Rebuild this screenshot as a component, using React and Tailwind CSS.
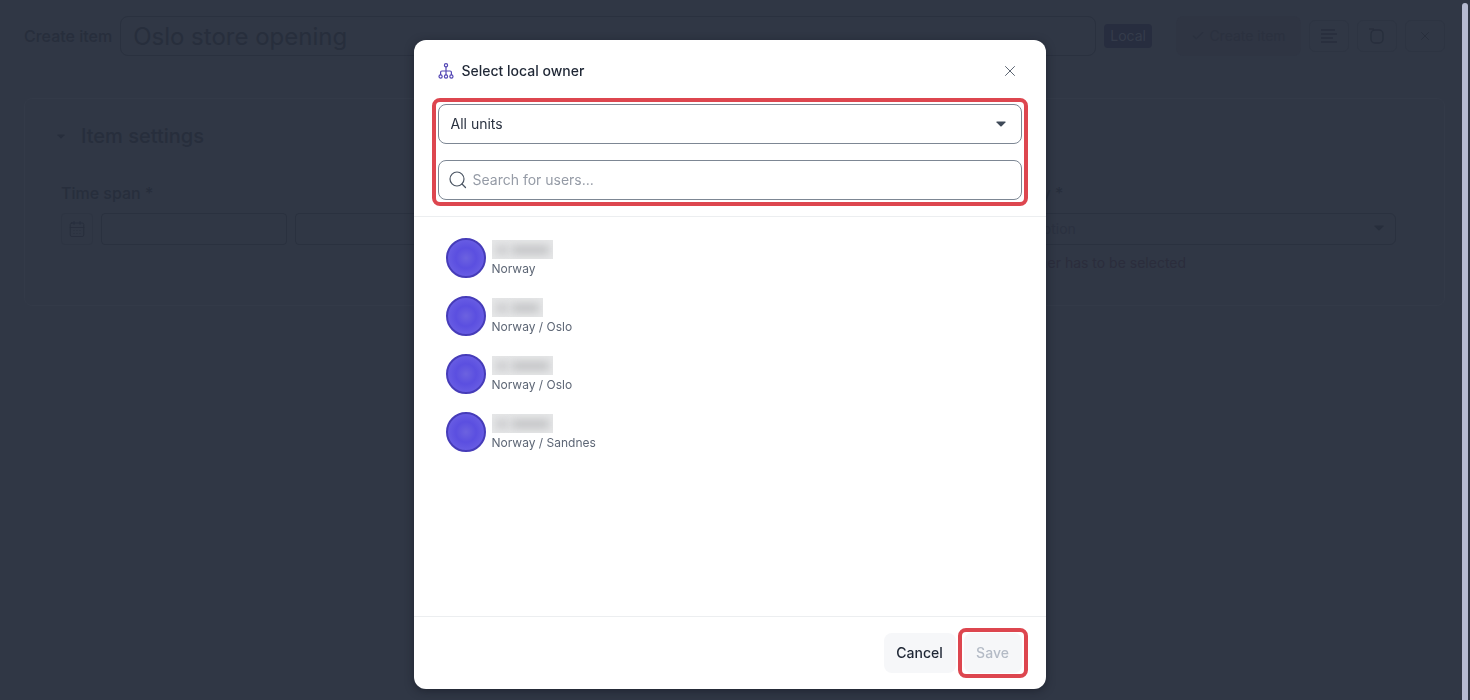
import React, { useState } from 'react';
import { CalendarDays, Check, X } from 'lucide-react';

const users = [
  { id: 1, unit: 'Norway', nameWidth: 'w-[61px]' },
  { id: 2, unit: 'Norway / Oslo', nameWidth: 'w-[51px]' },
  { id: 3, unit: 'Norway / Oslo', nameWidth: 'w-[61px]' },
  { id: 4, unit: 'Norway / Sandnes', nameWidth: 'w-[61px]' },
];

function Caret({ className }) {
  return (
    <svg viewBox="0 0 10 6" className={className} fill="currentColor" aria-hidden="true">
      <path d="M1 .5h8c.5 0 .7.5.4.9L5.6 5.2a.9.9 0 0 1-1.2 0L.6 1.4C.3 1 .5.5 1 .5z" />
    </svg>
  );
}

function UnitIcon() {
  return (
    <svg viewBox="0 0 16 16" className="h-4 w-4 text-[#5346b4]" fill="none" stroke="currentColor" strokeWidth="1.2" aria-hidden="true">
      <circle cx="8" cy="2.3" r="1.6" />
      <circle cx="2.6" cy="13.5" r="1.6" />
      <circle cx="8" cy="13.5" r="1.6" />
      <circle cx="13.4" cy="13.5" r="1.6" />
      <path d="M8 3.9v8M2.6 11.900V9.300c0-.9.4-1.300 1.300-1.300h8.200c.9 0 1.300.4 1.300 1.300v2.600" />
    </svg>
  );
}

function SearchIcon() {
  return (
    <svg viewBox="0 0 18 18" className="h-[18px] w-[18px] shrink-0 text-[#4b5563]" fill="none" stroke="currentColor" strokeWidth="1.2" strokeLinecap="round" aria-hidden="true">
      <circle cx="8" cy="8" r="7" />
      <path d="m13 13 3.500 3.500" />
    </svg>
  );
}

function LinesIcon() {
  return (
    <svg viewBox="0 0 18 18" className="h-[18px] w-[18px]" fill="none" stroke="currentColor" strokeWidth="1.5" aria-hidden="true">
      <path d="M1 3h14M1 7h16M1 11h12M1 15h16" />
    </svg>
  );
}

function PreviewIcon() {
  return (
    <svg viewBox="0 0 18 18" className="h-[18px] w-[18px]" fill="none" stroke="currentColor" strokeWidth="1.3" aria-hidden="true">
      <rect x="3" y="3" width="12" height="13" rx="4" />
      <path d="M1 2h5" />
    </svg>
  );
}

function ToolButton({ label, children }) {
  return (
    <button aria-label={label} className="flex h-8 w-10 items-center justify-center rounded-md border border-[#2d3442] text-[#272e3c]">
      {children}
    </button>
  );
}

function ItemPage() {
  return (
    <div className="min-w-0 flex-1 pt-4 pr-[14px] pl-6 text-[#272e3c]">
      <header className="flex h-10 items-center">
        <label htmlFor="item-name" className="mr-2 shrink-0 text-base font-medium">Create item</label>
        <input
          id="item-name"
          defaultValue="Oslo store opening"
          className="h-10 min-w-0 flex-1 rounded-lg border border-[#2a313f] bg-transparent px-3 text-2xl outline-none"
        />
        <span className="ml-2 rounded bg-[#272d3f] px-1.5 text-sm leading-6 text-[#353c4b]">Local</span>
        <button className="ml-6 flex h-10 w-[125px] items-center justify-center gap-1 rounded-lg bg-[#2f3543] text-sm text-[#2b313f]">
          <Check size={14} />
          Create item
        </button>
        <div className="ml-2 flex gap-2">
          <ToolButton label="Description"><LinesIcon /></ToolButton>
          <ToolButton label="Preview"><PreviewIcon /></ToolButton>
          <ToolButton label="Close"><X size={14} strokeWidth={1.5} /></ToolButton>
        </div>
      </header>

      <section className="mt-[42px] rounded-lg border border-[#333a48] px-6 pb-8">
        <div className="flex h-[74px] items-center">
          <button aria-label="Toggle item settings" className="flex h-6 w-6 items-center justify-center">
            <Caret className="h-[5px] w-2" />
          </button>
          <h2 className="ml-2 text-xl font-medium">Item settings</h2>
        </div>
        <div className="flex gap-8 pt-2 pr-6 pl-3">
          <fieldset className="min-w-0 flex-1">
            <legend className="mb-2 text-base leading-6 font-medium">Time span *</legend>
            <div className="flex gap-2">
              <button aria-label="Pick dates" className="flex h-8 w-8 items-center justify-center rounded border border-[#2d3442]">
                <CalendarDays size={18} strokeWidth={1.2} />
              </button>
              <input aria-label="Start date" className="h-8 w-[186px] rounded border border-[#2a313f] bg-transparent px-2" />
              <input aria-label="End date" className="h-8 w-[186px] rounded border border-[#2a313f] bg-transparent px-2" />
            </div>
          </fieldset>
          <div className="w-[416px]">
            <label htmlFor="category" className="mb-2 block text-base leading-6 font-medium">Category *</label>
            <div className="relative">
              <select id="category" className="h-8 w-full appearance-none rounded-md border border-[#2a313f] bg-transparent px-2 text-sm text-[#2b3140] outline-none">
                <option>Select option</option>
              </select>
              <Caret className="pointer-events-none absolute top-3 right-3 h-[6px] w-[10px]" />
            </div>
            <p className="mt-2 text-sm leading-5 text-[#2b2d3c]">Local owner has to be selected</p>
          </div>
        </div>
      </section>
    </div>
  );
}

function UserRow({ user }) {
  return (
    <li className="flex h-10 gap-1.5">
      <span className="h-10 w-10 rounded-full border-2 border-[#463cb9] bg-[radial-gradient(circle,#6c62e0_0%,#5b4fe0_40%,#7268e6_100%)]"></span>
      <div className="pt-[2px]">
        <div className={`flex h-[19px] items-center gap-1 overflow-hidden bg-[#e6e7e8] px-1 ${user.nameWidth}`}>
          <span className="h-2 w-3 bg-[#c6c7c9] blur-[4px]"></span>
          <span className="h-2 flex-1 bg-[#bebfc1] blur-[4px]"></span>
        </div>
        <p className="text-xs leading-5 text-[#5d6675]">{user.unit}</p>
      </div>
    </li>
  );
}

function OwnerDialog() {
  const [unit, setUnit] = useState('all');
  const [search, setSearch] = useState('');

  const visibleUsers = users.filter(u => u.unit.toLowerCase().includes(search.toLowerCase()));

  return (
    <div role="dialog" aria-labelledby="owner-title" className="flex w-[632px] max-w-full flex-col rounded-xl bg-white shadow-[0_2px_8px_rgba(15,20,30,0.5)]">
      <div className="border-b border-[#eceef0] px-6 pb-[10px]">
        <div className="flex h-[58px] items-center pt-1">
          <UnitIcon />
          <h1 id="owner-title" className="ml-2 flex-1 text-sm font-medium text-[#1f2735]">Select local owner</h1>
          <button aria-label="Close dialog" className="flex h-6 w-6 items-center justify-center text-[#4b5563]">
            <X size={18} strokeWidth={1.2} />
          </button>
        </div>

        <div className="-mx-1.5 flex flex-col gap-4 rounded-lg border-4 border-[#dd464f] p-0.5">
          <div className="relative">
            <select
              aria-label="Unit"
              value={unit}
              onChange={(e) => setUnit(e.target.value)}
              className="block h-10 w-full appearance-none rounded-lg border border-[#7d8794] bg-white px-3 text-sm text-[#2a3240] outline-none"
            >
              <option value="all">All units</option>
            </select>
            <Caret className="pointer-events-none absolute top-[17px] right-4 h-[6px] w-[10px] text-[#3f4a58]" />
          </div>
          <label className="flex h-10 items-center gap-1.5 rounded-lg border border-[#7d8794] px-2.5">
            <SearchIcon />
            <input
              type="text"
              aria-label="Search for users"
              placeholder="Search for users..."
              value={search}
              onChange={(e) => setSearch(e.target.value)}
              className="min-w-0 flex-1 text-sm text-[#2a3240] outline-none placeholder:text-[#959ba6]"
            />
          </label>
        </div>
      </div>

      <ul className="flex flex-1 flex-col gap-[18px] px-8 pt-[21px]">
        {visibleUsers.map(user => (
          <UserRow key={user.id} user={user} />
        ))}
      </ul>

      <div className="flex items-center justify-end gap-0.5 border-t border-[#eceef0] px-6 py-[11px] text-sm font-medium">
        <button className="h-10 w-[72px] rounded-lg bg-[#f6f7f9] text-[#1f2735]">Cancel</button>
        <div className="-mr-1.5 rounded-lg border-4 border-[#dd464f] px-0.5 py-px">
          <button disabled className="block h-10 w-[58px] rounded-lg bg-[#f6f7f9] text-[#b4bbc6]">Save</button>
        </div>
      </div>
    </div>
  );
}

function App() {
  return (
    <div className="flex min-h-screen bg-[#303745] font-['Inter',sans-serif]">
      <ItemPage />
      <div className="flex w-[11px] shrink-0 justify-center pt-[3px]">
        <div className="w-[6px] rounded-t-full bg-[#b5bad1]"></div>
      </div>

      <div className="fixed inset-0 flex justify-center pt-10 pr-[11px] pb-[11px]">
        <OwnerDialog />
      </div>
    </div>
  );
}

export default App;
